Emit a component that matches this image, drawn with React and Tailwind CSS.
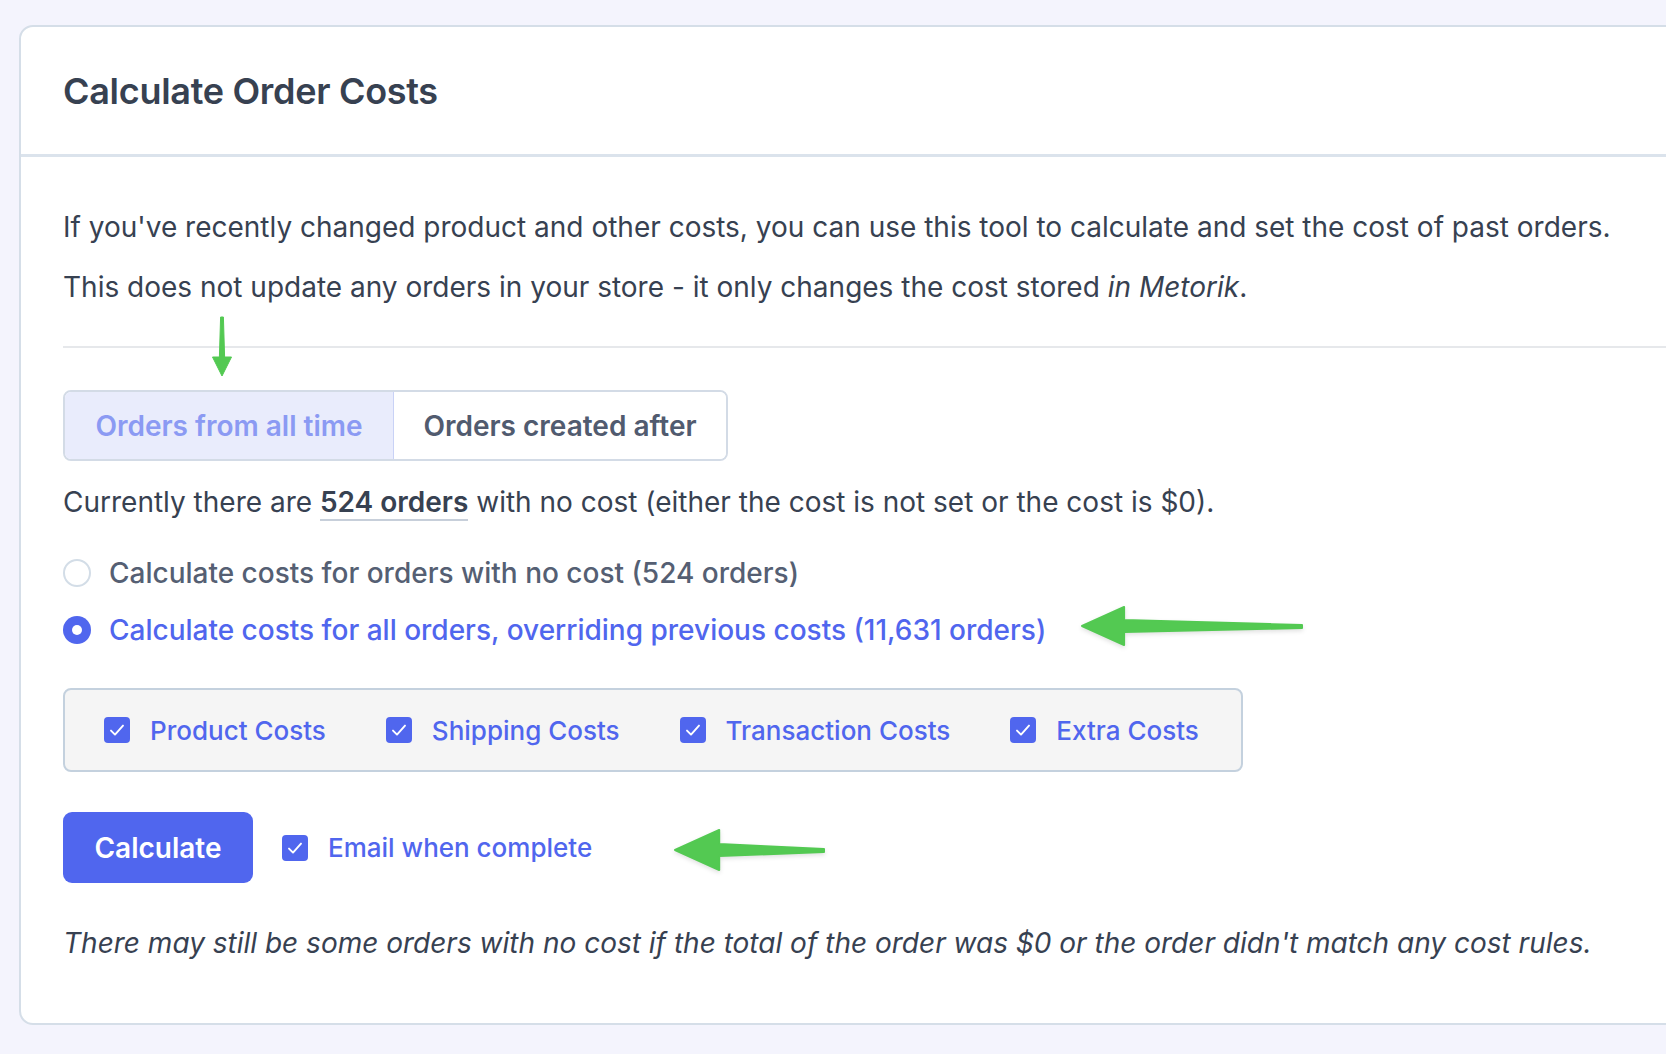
import React from 'react';

const Check = () => (
  <span className="flex h-[26px] w-[26px] shrink-0 items-center justify-center rounded-[4px] bg-[#5066ee]">
    <svg width="26" height="26" viewBox="0 0 26 26" fill="none">
      <path d="M7 13.6 L11 17.6 L19 8.6" stroke="white" strokeWidth="1.9" strokeLinecap="round" strokeLinejoin="round" />
    </svg>
  </span>
);

const Radio = ({ checked }) =>
  checked ? (
    <span className="flex h-[28px] w-[28px] shrink-0 items-center justify-center rounded-full bg-[#5066ee]">
      <span className="h-[10px] w-[10px] rounded-full bg-white" />
    </span>
  ) : (
    <span className="h-[28px] w-[28px] shrink-0 rounded-full border-2 border-[#d3dde7] bg-white" />
  );

// hand-drawn green pointer arrows
const ArrowDown = () => (
  <svg className="absolute left-[210px] top-[316px]" width="24" height="62" viewBox="0 0 24 62">
    <path d="M10.6 1 L13.4 1 L14.6 41 L21.5 41 L12 60 L2.5 41 L9.4 41 Z" fill="#53c952" strokeLinejoin="round" stroke="#53c952" strokeWidth="1" />
  </svg>
);

const ArrowLeft = ({ className, w, h }) => (
  <svg className={className} width={w} height={h} viewBox={`0 0 ${w} ${h}`} style={{ filter: 'drop-shadow(0 2px 2px rgba(0,0,0,0.12))' }}>
    <path
      d={`M2 ${h / 2} L${h * 1.05} 2 L${h * 1.05} ${h / 2 - 6} L${w - 2} ${h / 2 - 1} L${w - 2} ${h / 2 + 2} L${h * 1.05} ${h / 2 + 6} L${h * 1.05} ${h - 2} Z`}
      fill="#53c952"
      stroke="#53c952"
      strokeWidth="2"
      strokeLinejoin="round"
    />
  </svg>
);

export default function App() {
  const costs = ['Product Costs', 'Shipping Costs', 'Transaction Costs', 'Extra Costs'];

  return (
    <div
      className="relative h-[1054px] w-full overflow-hidden bg-[#f4f4fd] pl-[19px] pt-[25px]"
      style={{ fontFamily: 'Inter, "Noto Sans", sans-serif' }}
    >
      <div className="w-[1720px] rounded-[14px] border-2 border-[#d5dee8] bg-white">
        <div className="flex h-[130px] items-center border-b-[3px] border-[#dbe3ec] px-[42px]">
          <h1 className="text-[36px] font-semibold tracking-[-0.3px] text-[#374151]">Calculate Order Costs</h1>
        </div>

        <div className="px-[42px] pb-[60px] pt-[50px] text-[28px] text-[#374151]">
          <p className="leading-[40px]">
            If you've recently changed product and other costs, you can use this tool to calculate and set the cost of past orders.
          </p>
          <p className="mt-[20px] leading-[40px]">
            This does not update any orders in your store - it only changes the cost stored <em>in Metorik</em>.
          </p>

          <div className="mt-[39px] h-[2px] bg-[#e6e8eb]" />

          <div className="mt-[42px] inline-flex h-[71px] overflow-hidden rounded-[8px] border-2 border-[#d3dbe6] font-semibold">
            <button className="flex w-[329px] items-center justify-center border-r border-[#c9d2f6] bg-[#e9ecfc] text-[#8b9af3]">
              Orders from all time
            </button>
            <button className="flex w-[332px] items-center justify-center bg-white text-[#515b6f]">
              Orders created after
            </button>
          </div>

          <p className="mt-[21px] leading-[40px]">
            Currently there are{' '}
            <span className="border-b-2 border-[#c7cfda] font-semibold">524 orders</span> with no cost (either the cost
            is not set or the cost is $0).
          </p>

          <div className="mt-[31px] flex items-center gap-[18px] font-medium leading-[40px] text-[#555f73]">
            <Radio />
            <span>Calculate costs for orders with no cost (524 orders)</span>
          </div>
          <div className="mt-[17px] flex items-center gap-[18px] font-medium leading-[40px] text-[#5066ee]">
            <Radio checked />
            <span>Calculate costs for all orders, overriding previous costs (11,631 orders)</span>
          </div>

          <div className="mt-[38px] flex h-[84px] w-fit items-center gap-[60px] rounded-[8px] border-2 border-[#c4d1de] bg-[#f5f5f5] pl-[39px] pr-[42px] text-[26px] font-medium text-[#5066ee]">
            {costs.map((c) => (
              <label key={c} className="flex items-center gap-[20px]">
                <Check />
                <span>{c}</span>
              </label>
            ))}
          </div>

          <div className="mt-[40px] flex items-center">
            <button className="h-[71px] w-[190px] rounded-[9px] bg-[#5066ee] font-semibold text-white">Calculate</button>
            <label className="ml-[29px] flex items-center gap-[20px] text-[26px] font-medium text-[#5066ee]">
              <Check />
              <span>Email when complete</span>
            </label>
          </div>

          <p className="mt-[40px] italic leading-[40px]">
            There may still be some orders with no cost if the total of the order was $0 or the order didn't match any cost rules.
          </p>
        </div>
      </div>

      <ArrowDown />
      <ArrowLeft className="absolute left-[1080px] top-[605px]" w={224} h={42} />
      <ArrowLeft className="absolute left-[673px] top-[828px]" w={153} h={44} />
    </div>
  );
}
